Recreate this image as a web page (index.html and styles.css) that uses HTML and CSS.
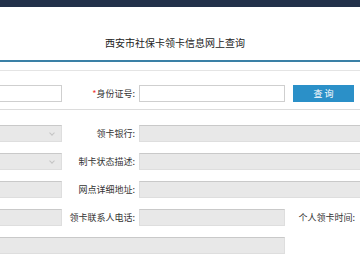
FILE: index.html
```html
<!DOCTYPE html>
<html lang="zh-CN">

<head>
    <meta charset="UTF-8">
    <meta name="viewport" content="width=device-width, initial-scale=1.0">
    <title>西安市社保卡领卡信息网上查询</title>
    <link rel="stylesheet" href="styles.css">
</head>

<body>
    <div class="topbar"></div>
    <div class="header">
        <h1 class="title">西安市社保卡领卡信息网上查询</h1>
    </div>

    <!-- 查询条件 -->
    <div class="search">
        <div class="grid">
            <input class="field" type="text">
            <label class="label"><em>*</em>身份证号:</label>
            <input class="field" type="text">
            <button class="btn">查 询</button>
        </div>
    </div>

    <!-- 查询结果 -->
    <div class="result grid">
        <div class="field grey select"><span class="arrow"></span></div>
        <label class="label">领卡银行:</label>
        <div class="field grey wide"></div>

        <div class="field grey select"><span class="arrow"></span></div>
        <label class="label">制卡状态描述:</label>
        <div class="field grey wide"></div>

        <div class="field grey"></div>
        <label class="label">网点详细地址:</label>
        <div class="field grey wide"></div>

        <div class="field grey"></div>
        <label class="label">领卡联系人电话:</label>
        <div class="field grey"></div>
        <label class="label side">个人领卡时间:</label>

        <div class="field grey full"></div>
    </div>
</body>

</html>
```

FILE: styles.css
```css
* {
    padding: 0;
    margin: 0;
    box-sizing: border-box;
}

body {
    overflow: hidden;
    background: #fff;
    font-family: "Noto Sans CJK SC", "Liberation Sans", sans-serif;
    color: #333;
}

.topbar {
    height: 7px;
    background: #22314a;
}

.header {
    height: 55px;
    border-bottom: 2px solid #3a80a6;
    padding-right: 10px;
    text-align: center;
}

.title {
    padding-top: 29px;
    font-size: 10px;
    line-height: 14px;
    font-weight: normal;
    color: #222;
}

.grid {
    display: grid;
    grid-template-columns: 82px 77px 146px 75px;
    margin-left: -20px;
    row-gap: 11px;
    align-items: center;
}

.search {
    margin-top: 8px;
    padding: 14px 0 7px;
    border-top: 1px solid #e4e4e4;
    border-bottom: 1px solid #dcdcdc;
}

.field {
    height: 17px;
    border: 1px solid #cfcfcf;
    background: #fff;
    outline: none;
}

.label {
    padding-right: 4px;
    text-align: right;
    font-size: 9px;
    line-height: 17px;
    color: #333;
    white-space: nowrap;
}

.label em {
    font-style: normal;
    color: #e33;
}

.btn {
    width: 61px;
    height: 17px;
    margin-left: 8px;
    border: 0;
    background: #2b90c8;
    color: #fff;
    font-family: inherit;
    font-size: 9px;
}

.result {
    margin-top: 15px;
}

.grey {
    background: #e8e8e8;
    border-color: #dedede;
    border-top-color: #c9c9c9;
}

.select {
    position: relative;
}

.arrow {
    position: absolute;
    right: 7px;
    top: 5px;
    width: 4px;
    height: 4px;
    border-right: 1px solid #c4c4c4;
    border-bottom: 1px solid #c4c4c4;
    transform: rotate(45deg);
}

.wide {
    grid-column: 3 / 5;
    width: 240px;
}

.side {
    padding-right: 5px;
}

.full {
    grid-column: 1 / 4;
}
```
